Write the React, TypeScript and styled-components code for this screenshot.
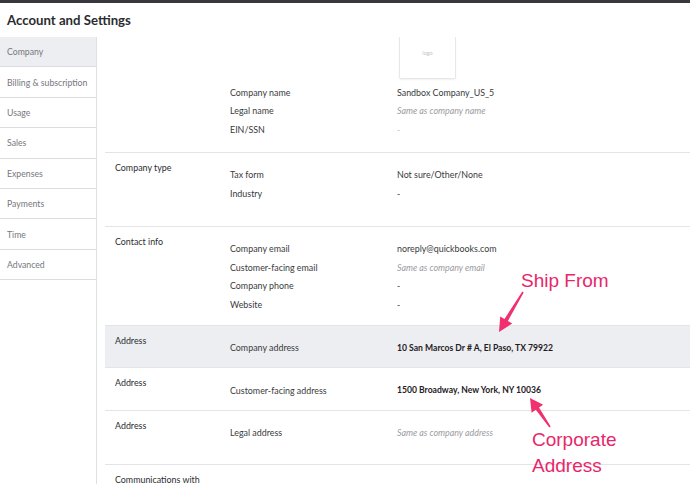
import React from "react";
import styled, { createGlobalStyle } from "styled-components";

const Global = createGlobalStyle`
  html, body { margin: 0; padding: 0; background: #fff; }
  body { font-family: Lato, "Open Sans", sans-serif; color: #393a3d; }
  * { box-sizing: border-box; }
`;

const Page = styled.div`
  position: relative;
  width: 690px;
  height: 484px;
  overflow: hidden;
  background: #fff;
`;

const TopBar = styled.div`
  height: 3px;
  background: #38393c;
`;

const Header = styled.div`
  height: 34px;
  display: flex;
  align-items: center;
  padding-left: 7px;
  font-size: 13.2px;
  font-weight: 700;
  color: #2b2c2f;
`;

const Body = styled.div`
  display: flex;
  height: 447px;
`;

const Sidebar = styled.nav`
  width: 97px;
  flex: none;
  border-right: 1px solid #dfe0e3;
  display: flex;
  flex-direction: column;
`;

const NavItem = styled.div<{ $active?: boolean }>`
  height: 30.4px;
  display: flex;
  align-items: center;
  padding-left: 7px;
  font-size: 8.7px;
  color: #76777c;
  background: ${(p) => (p.$active ? "#eceef1" : "#fff")};
  border-bottom: 1px solid #dcdde0;
  white-space: nowrap;
`;

const Main = styled.main`
  flex: 1;
  padding-left: 8px;
  display: flex;
  flex-direction: column;
`;

const Section = styled.section<{ $highlight?: boolean; $first?: boolean }>`
  display: flex;
  background: ${(p) => (p.$highlight ? "#eceef1" : "transparent")};
  border-top: ${(p) => (p.$first ? "none" : "1px solid #e3e4e7")};
`;

const Title = styled.div`
  width: 125px;
  flex: none;
  padding: 8px 0 0 10px;
  font-size: 8.9px;
  line-height: 14px;
  color: #2b2c2f;
  white-space: nowrap;
`;

const Rows = styled.div<{ $pt: number; $pb: number }>`
  flex: 1;
  display: flex;
  flex-direction: column;
  padding-top: ${(p) => p.$pt}px;
  padding-bottom: ${(p) => p.$pb}px;
`;

const Row = styled.div`
  display: grid;
  grid-template-columns: 167px 1fr;
  height: 18.5px;
  align-items: center;
  font-size: 8.9px;
  white-space: nowrap;
`;

const Label = styled.span`
  color: #393a3d;
`;

const Value = styled.span<{ $kind?: "plain" | "muted" | "bold" }>`
  color: ${(p) =>
    p.$kind === "muted" ? "#9a9ca1" : p.$kind === "bold" ? "#1f2023" : "#393a3d"};
  font-style: ${(p) => (p.$kind === "muted" ? "italic" : "normal")};
  font-weight: ${(p) => (p.$kind === "bold" ? 700 : 400)};
  font-size: ${(p) => (p.$kind === "bold" ? "8.6px" : "8.9px")};
`;

const LogoRow = styled.div`
  display: grid;
  grid-template-columns: 169px 1fr;
  margin-bottom: 4px;
`;

const LogoBox = styled.div`
  width: 57px;
  height: 42px;
  border: 1px solid #e6e7ea;
  border-top: none;
  border-radius: 0 0 2px 2px;
  box-shadow: 0 1px 2px rgba(0, 0, 0, 0.06);
  display: flex;
  align-items: center;
  justify-content: center;
  padding-bottom: 10px;
  font-size: 5.5px;
  color: #c4c5c9;
`;

const Overlay = styled.svg`
  position: absolute;
  left: 0;
  top: 0;
  pointer-events: none;
`;

const Note = styled.div<{ $x: number; $y: number }>`
  position: absolute;
  left: ${(p) => p.$x}px;
  top: ${(p) => p.$y}px;
  font-family: "Liberation Sans", Arial, sans-serif;
  font-size: 19px;
  line-height: 26px;
  color: #e8276b;
  white-space: nowrap;
`;

type R = { label: string; value: string; kind?: "plain" | "muted" | "bold" };

const nav = [
  "Company",
  "Billing & subscription",
  "Usage",
  "Sales",
  "Expenses",
  "Payments",
  "Time",
  "Advanced",
];

const sections: { title: string; rows: R[]; pb: number; highlight?: boolean }[] = [
  {
    title: "Company type",
    rows: [
      { label: "Tax form", value: "Not sure/Other/None" },
      { label: "Industry", value: "-" },
    ],
    pb: 23,
  },
  {
    title: "Contact info",
    rows: [
      { label: "Company email", value: "noreply@quickbooks.com" },
      { label: "Customer-facing email", value: "Same as company email", kind: "muted" },
      { label: "Company phone", value: "-" },
      { label: "Website", value: "-" },
    ],
    pb: 11,
  },
  {
    title: "Address",
    rows: [
      { label: "Company address", value: "10 San Marcos Dr # A, El Paso, TX 79922", kind: "bold" },
    ],
    pb: 10,
    highlight: true,
  },
  {
    title: "Address",
    rows: [
      { label: "Customer-facing address", value: "1500 Broadway, New York, NY 10036", kind: "bold" },
    ],
    pb: 10,
  },
  {
    title: "Address",
    rows: [{ label: "Legal address", value: "Same as company address", kind: "muted" }],
    pb: 22,
  },
  {
    title: "Communications with",
    rows: [],
    pb: 10,
  },
];

export default function App() {
  return (
    <Page>
      <Global />
      <TopBar />
      <Header>Account and Settings</Header>
      <Body>
        <Sidebar>
          {nav.map((n, i) => (
            <NavItem key={n} $active={i === 0}>
              {n}
            </NavItem>
          ))}
        </Sidebar>
        <Main>
          <Section $first>
            <Title />
            <Rows $pt={0} $pb={13}>
              <LogoRow>
                <span />
                <LogoBox>logo</LogoBox>
              </LogoRow>
              <Row>
                <Label>Company name</Label>
                <Value>Sandbox Company_US_5</Value>
              </Row>
              <Row>
                <Label>Legal name</Label>
                <Value $kind="muted">Same as company name</Value>
              </Row>
              <Row>
                <Label>EIN/SSN</Label>
                <Value $kind="muted">-</Value>
              </Row>
            </Rows>
          </Section>
          {sections.map((s, i) => (
            <Section key={i} $highlight={s.highlight}>
              <Title>{s.title}</Title>
              <Rows $pt={13} $pb={s.pb}>
                {s.rows.map((r) => (
                  <Row key={r.label}>
                    <Label>{r.label}</Label>
                    <Value $kind={r.kind}>{r.value}</Value>
                  </Row>
                ))}
              </Rows>
            </Section>
          ))}
        </Main>
      </Body>
      <Overlay width="690" height="484" viewBox="0 0 690 484">
        <polygon
          fill="#f0306f"
          points="523.7,292.4 507.9,321.0 512.2,323.6 499,332 500.2,316.4 504.5,319.0 522.3,291.6"
        />
        <polygon
          fill="#f0306f"
          points="550.7,426.5 539.0,407.6 543.2,404.7 530,398 531.6,412.7 535.8,409.8 549.3,427.5"
        />
      </Overlay>
      <Note $x={521} $y={268}>Ship From</Note>
      <Note $x={532} $y={427}>
        Corporate
        <br />
        Address
      </Note>
    </Page>
  );
}
